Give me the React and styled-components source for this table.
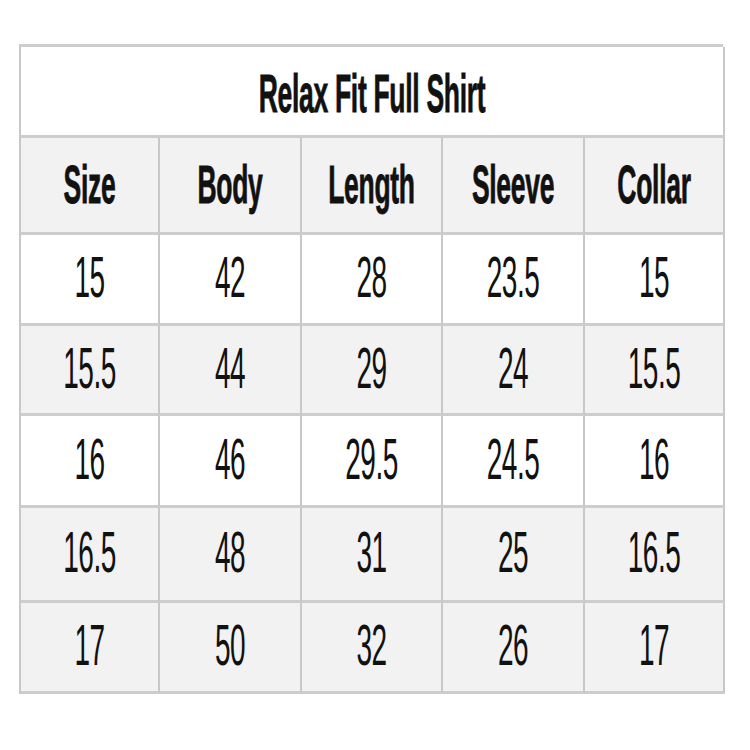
import React from 'react';
import styled, { createGlobalStyle } from 'styled-components';

const GlobalStyle = createGlobalStyle`
  html, body {
    margin: 0;
    padding: 0;
    background: #ffffff;
  }
`;

const Page = styled.div`
  width: 750px;
  height: 750px;
  padding: 44px 27px 0 19px;
  box-sizing: border-box;
  font-family: 'Liberation Sans', Arial, sans-serif;
  color: #111111;
`;

const Table = styled.div`
  display: grid;
  grid-template-columns: 139px 142px 141px 142px 140px;
  grid-template-rows: 91px 97px 91px 90px 92px 95px 91px;
  border-top: 3px solid #cdcdcd;
  border-left: 2px solid #c8c8c8;
  box-sizing: border-box;
  width: 704px;
`;

const Cell = styled.div`
  display: flex;
  align-items: center;
  justify-content: center;
  background: ${(p) => (p.$shade ? '#f2f2f2' : '#ffffff')};
  border-right: 2px solid #c8c8c8;
  border-bottom: 3px solid #cdcdcd;
  box-sizing: border-box;
  overflow: hidden;
`;

const TitleCell = styled(Cell)`
  grid-column: 1 / -1;
  padding-top: 6px;
`;

const Text = styled.span`
  display: inline-block;
  font-size: ${(p) => (p.$bold ? '26.5px' : '28px')};
  font-weight: ${(p) => (p.$bold ? 700 : 400)};
  letter-spacing: ${(p) => (p.$bold ? '-0.3px' : '-0.5px')};
  transform: scaleY(2.05);
  line-height: 1;
  -webkit-text-stroke: ${(p) => (p.$bold ? '0.4px #111111' : '0')};
`;

const headers = ['Size', 'Body', 'Length', 'Sleeve', 'Collar'];

const rows = [
  ['15', '42', '28', '23.5', '15'],
  ['15.5', '44', '29', '24', '15.5'],
  ['16', '46', '29.5', '24.5', '16'],
  ['16.5', '48', '31', '25', '16.5'],
  ['17', '50', '32', '26', '17'],
];

const shaded = [false, true, false, true, true];

export default function App() {
  return (
    <Page>
      <GlobalStyle />
      <Table>
        <TitleCell>
          <Text $bold>Relax Fit Full Shirt</Text>
        </TitleCell>
        {headers.map((h) => (
          <Cell key={h} $shade>
            <Text $bold>{h}</Text>
          </Cell>
        ))}
        {rows.map((row, i) =>
          row.map((v, j) => (
            <Cell key={`${i}-${j}`} $shade={shaded[i]}>
              <Text>{v}</Text>
            </Cell>
          ))
        )}
      </Table>
    </Page>
  );
}
